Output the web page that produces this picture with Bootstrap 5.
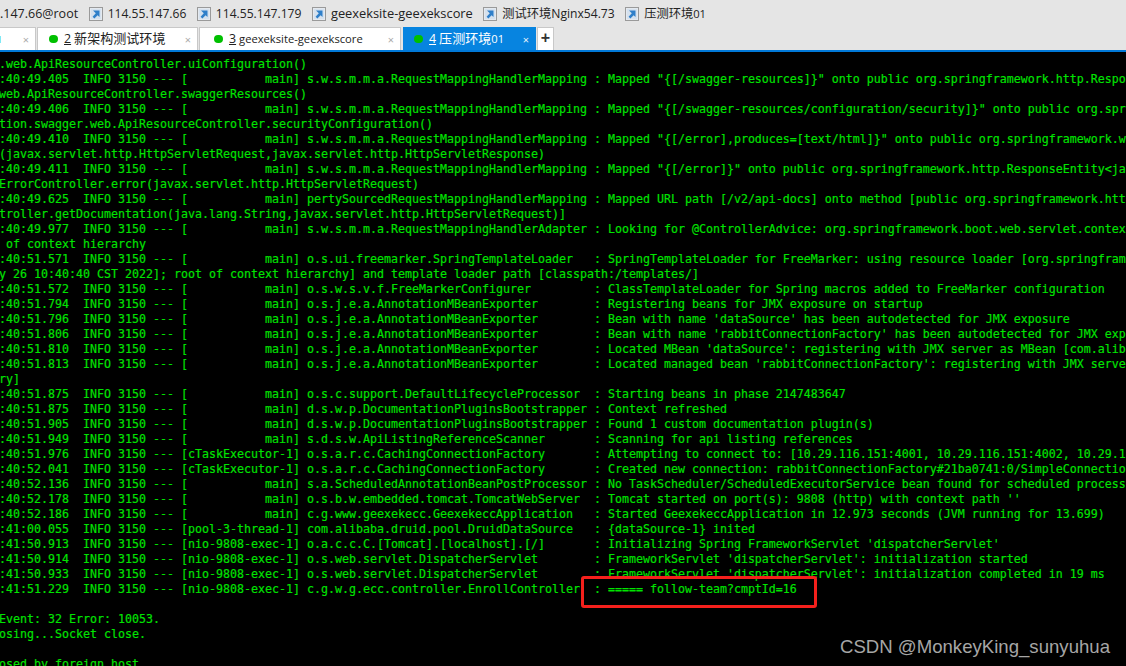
<!DOCTYPE html>
<html lang="zh-CN">
<head>
<meta charset="utf-8">
<title>Terminal</title>
<link href="https://cdn.jsdelivr.net/npm/bootstrap@5.3.0/dist/css/bootstrap.min.css" rel="stylesheet">
<style>
html,body{height:666px;overflow:hidden;background:#000}
.chrome-area{background:#e5e5e5;font-family:"Open Sans","Noto Sans CJK SC",sans-serif;color:#222}
.links-row{height:27px;padding-top:1px;font-size:12.1px;white-space:nowrap;gap:10.5px}
.link-item{gap:5px}
.link-ico{width:14px;height:14px;flex:none;display:block}
.name-first{font-size:12.5px}
.name-wide{font-size:12.85px}
.cjk-top{font-size:12.25px}
.digits-small{font-size:11.2px}
.tabs-row{height:23px;font-size:11.2px;white-space:nowrap}
.cjk-tab{font-size:13.05px}
.term-tab{background:#fff;border:1px solid #c8c8c8;border-bottom:0;height:23px;padding-left:11px;padding-right:6px;color:#222}
.term-tab.is-first{width:36px;margin-right:1px;border-left:0;padding-left:0}
.term-tab.is-second{width:161px;margin-right:1px}
.term-tab.is-third{width:202px;margin-right:2px;padding-left:14px}
.term-tab.is-active{width:133px;margin-right:1px;padding-left:10px;background:#0784e0;border-color:#0784e0;color:#fff}
.tab-plus{width:17px;background:#fff;border:1px solid #c8c8c8;border-bottom:0;height:23px;font-size:16px;font-weight:700;line-height:20px;color:#333;text-align:center;font-family:"Liberation Sans",sans-serif}
.status-dot{width:8.5px;height:8.5px;border-radius:50%;background:#00c000;flex:none;margin-right:6.5px}
.tab-num{text-decoration:underline;margin-right:3px;font-size:12.4px}
.tab-x{color:#aaa;font-size:11px;margin-left:auto;line-height:1}
.is-active .tab-x{color:#e8f2fb}
.cyan-mark{width:1px;height:7px;background:#7fe9f5;flex:none}
.blue-strip{height:2px;background:#0078d7}
.term-wrap{height:614px;background:#000}
.term-log{margin:0;padding:5px 0 0 0;margin-left:-1px;font-family:"DejaVu Sans Mono","Liberation Mono",monospace;font-size:11.63px;line-height:15px;color:#00e400;-webkit-text-stroke:.15px #00e400;white-space:pre;overflow:hidden;height:614px}
.red-box{left:581px;top:524px;width:236px;height:32px;border:3px solid #f4201c;border-radius:3px}
.mark-text{right:16px;top:584px;font-family:"Liberation Sans",sans-serif;font-size:18.6px;color:#a6a6a6;line-height:22px;white-space:nowrap}
</style>
</head>
<body>
<svg width="0" height="0" class="d-block">
<defs>
<symbol id="sc" viewBox="0 0 14 14">
<rect x=".5" y=".5" width="13" height="13" fill="#e4e9ef" stroke="#9a9a9a"/>
<rect x="2" y="2" width="10" height="10" fill="#d5e1ee"/>
<path d="M4 3.5h6.5V10L8.6 8.2 5.4 11.5 3.6 9.7 6.8 6.3z" fill="#2f7fc9"/>
</symbol>
</defs>
</svg>
<div class="chrome-area">
  <div class="links-row d-flex align-items-center overflow-hidden">
    <span class="name-first">.147.66@root</span>
    <span class="link-item d-flex align-items-center"><svg class="link-ico"><use href="#sc"/></svg><span>114.55.147.66</span></span>
    <span class="link-item d-flex align-items-center"><svg class="link-ico"><use href="#sc"/></svg><span>114.55.147.179</span></span>
    <span class="link-item d-flex align-items-center"><svg class="link-ico"><use href="#sc"/></svg><span class="name-wide">geexeksite-geexekscore</span></span>
    <span class="link-item d-flex align-items-center"><svg class="link-ico"><use href="#sc"/></svg><span><span class="cjk-top">测试环境</span>Nginx54.73</span></span>
    <span class="link-item d-flex align-items-center"><svg class="link-ico"><use href="#sc"/></svg><span><span class="cjk-top">压测环境</span><span class="digits-small">01</span></span></span>
  </div>
  <div class="tabs-row d-flex align-items-stretch overflow-hidden">
    <div class="term-tab is-first d-flex align-items-center"><span class="cyan-mark"></span><span class="tab-x">×</span></div>
    <div class="term-tab is-second d-flex align-items-center"><span class="status-dot"></span><span class="tab-num">2</span><span class="cjk-tab">新架构测试环境</span><span class="tab-x">×</span></div>
    <div class="term-tab is-third d-flex align-items-center"><span class="status-dot"></span><span class="tab-num">3</span><span>geexeksite-geexekscore</span><span class="tab-x">×</span></div>
    <div class="term-tab is-active d-flex align-items-center"><span class="status-dot"></span><span class="tab-num">4</span><span><span class="cjk-tab">压测环境</span>01</span><span class="tab-x">×</span></div>
    <div class="tab-plus">+</div>
  </div>
  <div class="blue-strip"></div>
</div>
<div class="term-wrap position-relative overflow-hidden">
<pre class="term-log">.web.ApiResourceController.uiConfiguration()
:40:49.405  INFO 3150 --- [           main] s.w.s.m.m.a.RequestMappingHandlerMapping : Mapped "{[/swagger-resources]}" onto public org.springframework.http.ResponseEntity
web.ApiResourceController.swaggerResources()
:40:49.406  INFO 3150 --- [           main] s.w.s.m.m.a.RequestMappingHandlerMapping : Mapped "{[/swagger-resources/configuration/security]}" onto public org.springframework
tion.swagger.web.ApiResourceController.securityConfiguration()
:40:49.410  INFO 3150 --- [           main] s.w.s.m.m.a.RequestMappingHandlerMapping : Mapped "{[/error],produces=[text/html]}" onto public org.springframework.web.servlet
(javax.servlet.http.HttpServletRequest,javax.servlet.http.HttpServletResponse)
:40:49.411  INFO 3150 --- [           main] s.w.s.m.m.a.RequestMappingHandlerMapping : Mapped "{[/error]}" onto public org.springframework.http.ResponseEntity&lt;java.util.Map
ErrorController.error(javax.servlet.http.HttpServletRequest)
:40:49.625  INFO 3150 --- [           main] pertySourcedRequestMappingHandlerMapping : Mapped URL path [/v2/api-docs] onto method [public org.springframework.http.ResponseEntity
troller.getDocumentation(java.lang.String,javax.servlet.http.HttpServletRequest)]
:40:49.977  INFO 3150 --- [           main] s.w.s.m.m.a.RequestMappingHandlerAdapter : Looking for @ControllerAdvice: org.springframework.boot.web.servlet.context.Annotation
 of context hierarchy
:40:51.571  INFO 3150 --- [           main] o.s.ui.freemarker.SpringTemplateLoader   : SpringTemplateLoader for FreeMarker: using resource loader [org.springframework.boot
y 26 10:40:40 CST 2022]; root of context hierarchy] and template loader path [classpath:/templates/]
:40:51.572  INFO 3150 --- [           main] o.s.w.s.v.f.FreeMarkerConfigurer         : ClassTemplateLoader for Spring macros added to FreeMarker configuration
:40:51.794  INFO 3150 --- [           main] o.s.j.e.a.AnnotationMBeanExporter        : Registering beans for JMX exposure on startup
:40:51.796  INFO 3150 --- [           main] o.s.j.e.a.AnnotationMBeanExporter        : Bean with name 'dataSource' has been autodetected for JMX exposure
:40:51.806  INFO 3150 --- [           main] o.s.j.e.a.AnnotationMBeanExporter        : Bean with name 'rabbitConnectionFactory' has been autodetected for JMX exposure
:40:51.810  INFO 3150 --- [           main] o.s.j.e.a.AnnotationMBeanExporter        : Located MBean 'dataSource': registering with JMX server as MBean [com.alibaba.druid
:40:51.813  INFO 3150 --- [           main] o.s.j.e.a.AnnotationMBeanExporter        : Located managed bean 'rabbitConnectionFactory': registering with JMX server as MBean
ry]
:40:51.875  INFO 3150 --- [           main] o.s.c.support.DefaultLifecycleProcessor  : Starting beans in phase 2147483647
:40:51.875  INFO 3150 --- [           main] d.s.w.p.DocumentationPluginsBootstrapper : Context refreshed
:40:51.905  INFO 3150 --- [           main] d.s.w.p.DocumentationPluginsBootstrapper : Found 1 custom documentation plugin(s)
:40:51.949  INFO 3150 --- [           main] s.d.s.w.ApiListingReferenceScanner       : Scanning for api listing references
:40:51.976  INFO 3150 --- [cTaskExecutor-1] o.s.a.r.c.CachingConnectionFactory       : Attempting to connect to: [10.29.116.151:4001, 10.29.116.151:4002, 10.29.116.151:4003]
:40:52.041  INFO 3150 --- [cTaskExecutor-1] o.s.a.r.c.CachingConnectionFactory       : Created new connection: rabbitConnectionFactory#21ba0741:0/SimpleConnection@5a1b2c3d
:40:52.136  INFO 3150 --- [           main] s.a.ScheduledAnnotationBeanPostProcessor : No TaskScheduler/ScheduledExecutorService bean found for scheduled processing
:40:52.178  INFO 3150 --- [           main] o.s.b.w.embedded.tomcat.TomcatWebServer  : Tomcat started on port(s): 9808 (http) with context path ''
:40:52.186  INFO 3150 --- [           main] c.g.www.geexekecc.GeexekeccApplication   : Started GeexekeccApplication in 12.973 seconds (JVM running for 13.699)
:41:00.055  INFO 3150 --- [pool-3-thread-1] com.alibaba.druid.pool.DruidDataSource   : {dataSource-1} inited
:41:50.913  INFO 3150 --- [nio-9808-exec-1] o.a.c.c.C.[Tomcat].[localhost].[/]       : Initializing Spring FrameworkServlet 'dispatcherServlet'
:41:50.914  INFO 3150 --- [nio-9808-exec-1] o.s.web.servlet.DispatcherServlet        : FrameworkServlet 'dispatcherServlet': initialization started
:41:50.933  INFO 3150 --- [nio-9808-exec-1] o.s.web.servlet.DispatcherServlet        : FrameworkServlet 'dispatcherServlet': initialization completed in 19 ms
:41:51.229  INFO 3150 --- [nio-9808-exec-1] c.g.w.g.ecc.controller.EnrollController  : ===== follow-team?cmptId=16

Event: 32 Error: 10053.
osing...Socket close.

osed by foreign host.</pre>
  <div class="red-box position-absolute"></div>
  <div class="mark-text position-absolute">CSDN @MonkeyKing_sunyuhua</div>
</div>
</body>
</html>
